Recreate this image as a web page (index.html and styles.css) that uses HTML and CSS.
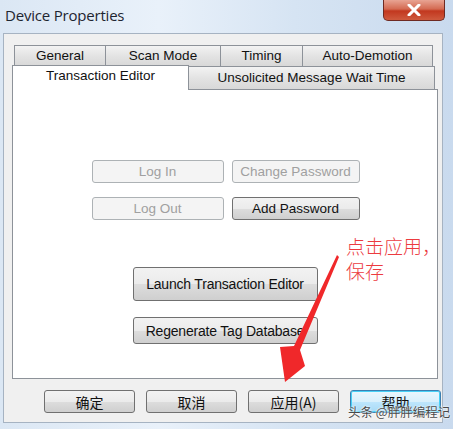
FILE: index.html
```html
<!DOCTYPE html>
<html lang="zh-CN">
<head>
    <meta charset="UTF-8">
    <title>Device Properties</title>
    <link rel="stylesheet" href="styles.css">
</head>
<body>
<div class="window">
    <div class="titlebar">
        <span class="title">Device Properties</span>
        <div class="close-btn">
            <svg width="16" height="12" viewBox="0 0 16 12"><path d="M3 1 L13 11 M13 1 L3 11" stroke="#fff" stroke-width="3" stroke-linecap="round"/></svg>
        </div>
    </div>

    <div class="client">
        <div class="tabs">
            <div class="tab-row row-back">
                <div class="tab" style="width:92px">General</div>
                <div class="tab" style="width:116px">Scan Mode</div>
                <div class="tab" style="width:83px">Timing</div>
                <div class="tab" style="width:131px">Auto-Demotion</div>
            </div>
            <div class="tab-row row-front">
                <div class="tab active" style="width:177px">Transaction Editor</div>
                <div class="tab" style="width:247px">Unsolicited Message Wait Time</div>
            </div>
        </div>

        <div class="panel">
            <div class="btn-grid">
                <button class="btn disabled">Log In</button>
                <button class="btn disabled">Change Password</button>
                <button class="btn disabled">Log Out</button>
                <button class="btn">Add Password</button>
            </div>
            <div class="btn-col">
                <button class="btn big">Launch Transaction Editor</button>
                <button class="btn big small-h">Regenerate Tag Database</button>
            </div>
        </div>

        <div class="dialog-buttons">
            <button class="btn dlg">确定</button>
            <button class="btn dlg">取消</button>
            <button class="btn dlg">应用(A)</button>
            <button class="btn dlg focused">帮助</button>
        </div>
    </div>

    <!-- 標註 -->
    <div class="note">点击应用，<br>保存</div>
    <svg class="arrow" width="453" height="429" viewBox="0 0 453 429">
        <polygon points="337,255 339,257 300,350 305,366 285,382 280,347 294,346" fill="#f0282a"/>
    </svg>
    <div class="watermark">头条 @胖胖编程记</div>
</div>
</body>
</html>
```

FILE: styles.css
```css
body {
    margin: 0;
    font-family: 'Liberation Sans', Arial, 'Noto Sans CJK SC', sans-serif;
}
.window {
    position: relative;
    width: 453px;
    height: 429px;
    overflow: hidden;
    background: linear-gradient(90deg, #dbe7f4 0%, #e9f1fa 35%, #d6e4f3 65%, #c9daee 100%);
}
.titlebar {
    height: 33px;
    display: flex;
    justify-content: space-between;
    align-items: flex-start;
}
.title {
    font-family: 'Open Sans', 'DejaVu Sans', sans-serif;
    font-size: 15px;
    color: #1e2530;
    padding: 5px 0 0 5px;
    letter-spacing: -0.2px;
}
.close-btn {
    width: 60px;
    height: 20px;
    margin-right: 8px;
    border: 1px solid #6e2a22;
    border-top: none;
    border-radius: 0 0 5px 5px;
    background: linear-gradient(#e8a493 0%, #d46a52 45%, #c2381f 55%, #cf5a3e 100%);
    display: flex;
    justify-content: center;
    align-items: center;
}
.client {
    margin-left: 3px;
    width: 440px;
    height: 390px;
    background: #f0f0f0;
    border: 1px solid #a6b3c2;
    padding-top: 11px;
    box-sizing: border-box;
}
.tabs {
    padding-left: 8px;
}
.tab-row {
    display: flex;
    font-size: 13.5px;
    color: #111;
}
.row-back {
    padding-left: 2px;
}
.tab {
    height: 21px;
    line-height: 20px;
    text-align: center;
    box-sizing: border-box;
    border: 1px solid #8d9299;
    border-bottom: none;
    margin-right: -1px;
    background: linear-gradient(#f3f3f3, #e3e3e3 50%, #d8d8d8);
}
.row-front {
    margin-top: -1px;
    align-items: flex-end;
}
.row-front .tab {
    height: 23px;
    line-height: 21px;
}
.tab.active {
    height: 25px;
    line-height: 20px;
    background: #fff;
    position: relative;
    z-index: 1;
    margin-bottom: -1px;
}
.panel {
    margin-left: 8px;
    width: 426px;
    height: 290px;
    box-sizing: border-box;
    background: #fff;
    border: 1px solid #8d9299;
    padding-top: 70px;
}
.btn {
    font-family: 'Liberation Sans', Arial, 'Noto Sans CJK SC', sans-serif;
    font-size: 13.5px;
    color: #111;
    border: 1px solid #707070;
    border-radius: 3px;
    background: linear-gradient(#f2f2f2 0%, #ebebeb 50%, #dddddd 51%, #cfcfcf 100%);
    padding: 0;
    height: 23px;
}
.btn.disabled {
    color: #a0a0a0;
    border-color: #adb2b5;
    background: #f4f4f4;
}
.btn-grid {
    display: grid;
    grid-template-columns: 132px 128px;
    column-gap: 8px;
    row-gap: 14px;
    justify-content: center;
    margin-left: 1px;
}
.btn-col {
    display: flex;
    flex-direction: column;
    align-items: center;
    gap: 16px;
    margin-top: 47px;
}
.btn.big {
    width: 185px;
    height: 34px;
    font-size: 14px;
    letter-spacing: -0.2px;
}
.btn.small-h {
    height: 27px;
}
.dialog-buttons {
    display: flex;
    gap: 11px;
    padding: 11px 0 0 40px;
}
.btn.dlg {
    width: 91px;
    height: 23px;
    font-family: 'Noto Sans CJK SC', sans-serif;
    font-size: 14px;
    line-height: 20px;
}
.btn.focused {
    border-color: #3c7fb1;
    box-shadow: inset 0 0 0 1px #48d0f6;
    background: linear-gradient(#eaf6fd 0%, #d9f0fc 50%, #bee6fd 51%, #a7d9f5 100%);
}
.note {
    position: absolute;
    left: 346px;
    top: 233px;
    font-family: 'Noto Sans CJK SC', sans-serif;
    font-weight: 300;
    font-size: 19px;
    line-height: 25px;
    color: #ec3b3f;
}
.arrow {
    position: absolute;
    left: 0;
    top: 0;
}
.watermark {
    position: absolute;
    left: 348px;
    top: 402px;
    font-family: 'Noto Sans CJK SC', sans-serif;
    font-size: 12.5px;
    color: #4a4a4a;
    text-shadow: 0 0 2px #fff, 0 0 2px #fff;
}
```
